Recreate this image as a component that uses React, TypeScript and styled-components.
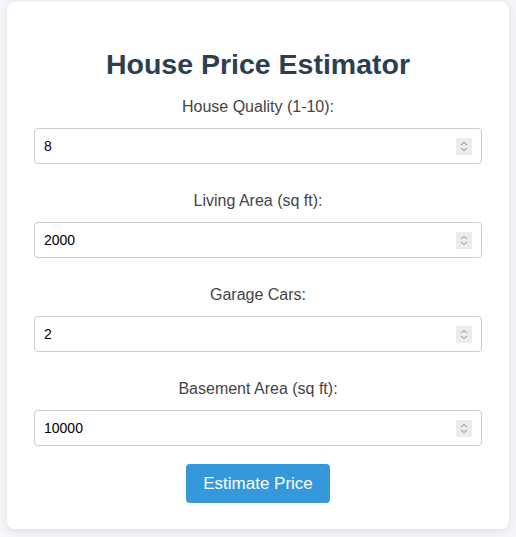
import styled, {createGlobalStyle} from "styled-components";

const Global = createGlobalStyle`
  html, body {
    margin: 0;
    padding: 0;
    background: #f4f6f9;
    font-family: "Liberation Sans", Arial, sans-serif;
  }
`;

const fields = [
  {label: "House Quality (1-10):", value: "8"},
  {label: "Living Area (sq ft):", value: "2000"},
  {label: "Garage Cars:", value: "2"},
  {label: "Basement Area (sq ft):", value: "10000"},
];

const Spinner = () => (
  <SpinBox>
    <svg width="16" height="17" viewBox="0 0 16 17">
      <path d="M5 7 L8 4.5 L11 7" fill="none" stroke="#8a8a8a" strokeWidth="1"/>
      <path d="M5 10 L8 12.5 L11 10" fill="none" stroke="#8a8a8a" strokeWidth="1"/>
    </svg>
  </SpinBox>
);

export default function App() {
  return (
    <>
      <Global/>
      <Page>
        <Card>
          <Title>House Price Estimator</Title>
          <Form onSubmit={(e) => e.preventDefault()}>
            {fields.map((f) => (
              <Group key={f.label}>
                <Label>{f.label}</Label>
                <InputWrap>
                  <Input type="number" defaultValue={f.value}/>
                  <Spinner/>
                </InputWrap>
              </Group>
            ))}
            <Button type="submit">Estimate Price</Button>
          </Form>
        </Card>
      </Page>
    </>
  );
}

const Page = styled.div`
  padding: 2px 7px 9px 7px;
`;

const Card = styled.div`
  background: #fff;
  border-radius: 8px;
  box-shadow: 0 2px 10px rgba(0, 0, 0, 0.1);
  padding: 46px 27px 26px 27px;
  display: flex;
  flex-direction: column;
  align-items: stretch;
`;

const Title = styled.h1`
  margin: 0 0 17px 0;
  text-align: center;
  font-size: 28.5px;
  line-height: 33px;
  font-weight: bold;
  color: #2c3e50;
`;

const Form = styled.form`
  display: flex;
  flex-direction: column;
  align-items: center;
`;

const Group = styled.div`
  width: 100%;
  display: flex;
  flex-direction: column;
  margin-bottom: 28px;

  &:nth-last-of-type(1) {
    margin-bottom: 18px;
  }
`;

const Label = styled.label`
  text-align: center;
  font-size: 16px;
  line-height: 18px;
  color: #444;
  margin-bottom: 12px;
`;

const InputWrap = styled.div`
  position: relative;
  width: 100%;
`;

const Input = styled.input`
  box-sizing: border-box;
  display: block;
  width: 100%;
  height: 36px;
  padding: 0 34px 0 9px;
  border: 1px solid #ccc;
  border-radius: 4px;
  font-family: "Liberation Sans", Arial, sans-serif;
  font-size: 14px;
  color: #000;
  background: #fff;
  outline: none;
  -moz-appearance: textfield;

  &::-webkit-inner-spin-button,
  &::-webkit-outer-spin-button {
    -webkit-appearance: none;
    margin: 0;
  }
`;

const SpinBox = styled.div`
  position: absolute;
  right: 10px;
  top: 10px;
  width: 16px;
  height: 17px;
  background: #ebebee;
  border-radius: 1px;
  display: flex;
  pointer-events: none;
`;

const Button = styled.button`
  background: #3498db;
  color: #fff;
  border: none;
  border-radius: 4px;
  padding: 0 17px;
  height: 39px;
  font-family: "Liberation Sans", Arial, sans-serif;
  font-size: 17px;
  cursor: pointer;
`;
